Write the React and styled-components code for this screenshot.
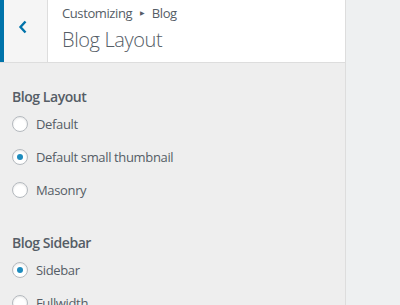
import React from "react";
import styled, { createGlobalStyle } from "styled-components";

const Global = createGlobalStyle`
  html, body { margin: 0; padding: 0; }
  body { background: #eef0f1; font-family: "Open Sans", "Noto Sans", sans-serif; }
`;

const Page = styled.div`
  display: flex;
  height: 305px;
  overflow: hidden;
`;

const Panel = styled.div`
  width: 345px;
  flex-shrink: 0;
  background: #eeeeee;
  border-right: 1px solid #dddddd;
  display: flex;
  flex-direction: column;
`;

const Header = styled.div`
  display: flex;
  flex-shrink: 0;
  height: 62px;
  background: #fff;
  border-bottom: 1px solid #dddddd;
`;

const BackButton = styled.button`
  width: 48px;
  height: 100%;
  flex-shrink: 0;
  padding: 20px 5px 0 0;
  border: none;
  border-left: 4px solid #0073aa;
  border-right: 1px solid #dddddd;
  background: #f5f5f5;
  display: flex;
  align-items: flex-start;
  justify-content: center;
  color: #0073aa;
  box-sizing: border-box;
`;

const TitleBox = styled.div`
  padding: 3px 0 0 14px;
  color: #555d66;
`;

const Crumb = styled.div`
  font-size: 13px;
  line-height: 20px;
  letter-spacing: -0.4px;
  color: #555d66;
  display: flex;
  align-items: center;
`;

const Arrow = styled.span`
  font-size: 6px;
  margin: 0 7px 0 8px;
`;

const Title = styled.div`
  font-size: 20px;
  font-weight: 300;
  line-height: 27px;
  letter-spacing: -0.4px;
  margin-top: 3px;
  color: #555d66;
`;

const Body = styled.div`
  padding: 24px 12px 0 12px;
  display: flex;
  flex-direction: column;
`;

const Group = styled.div`
  display: flex;
  flex-direction: column;
  margin-bottom: 18px;
`;

const GroupTitle = styled.div`
  font-size: 14px;
  font-weight: 600;
  line-height: 20px;
  letter-spacing: -0.45px;
  color: #555d66;
  margin-bottom: 9px;
`;

const Option = styled.label`
  display: flex;
  align-items: center;
  height: 16px;
  margin-bottom: 17px;
  font-size: 13px;
  letter-spacing: -0.35px;
  color: #555d66;
  white-space: nowrap;
`;

const Radio = styled.span`
  width: 16px;
  height: 16px;
  flex-shrink: 0;
  box-sizing: border-box;
  border-radius: 50%;
  border: 1px solid #b4b9be;
  background: #fff;
  box-shadow: inset 0 1px 2px rgba(0,0,0,0.1);
  margin-right: 8px;
  display: flex;
  align-items: center;
  justify-content: center;
  &::after {
    content: "";
    width: 6px;
    height: 6px;
    border-radius: 50%;
    background: ${(p) => (p.$checked ? "#1e8cbe" : "transparent")};
  }
`;

const Preview = styled.div`
  flex: 1;
  background: #eef0f1;
`;

const groups = [
  { title: "Blog Layout", options: ["Default", "Default small thumbnail", "Masonry"], checked: 1 },
  { title: "Blog Sidebar", options: ["Sidebar", "Fullwidth"], checked: 0 },
];

export default function App() {
  return (
    <Page>
      <Global />
      <Panel>
        <Header>
          <BackButton aria-label="Back">
            <svg width="10" height="14" viewBox="0 0 10 14">
              <path d="M7.5 1.5 L2.5 7 L7.5 12.5" fill="none" stroke="currentColor" strokeWidth="2.4" />
            </svg>
          </BackButton>
          <TitleBox>
            <Crumb>
              Customizing<Arrow>▶</Arrow>Blog
            </Crumb>
            <Title>Blog Layout</Title>
          </TitleBox>
        </Header>
        <Body>
          {groups.map((g) => (
            <Group key={g.title}>
              <GroupTitle>{g.title}</GroupTitle>
              {g.options.map((o, i) => (
                <Option key={o}>
                  <Radio $checked={i === g.checked} />
                  {o}
                </Option>
              ))}
            </Group>
          ))}
        </Body>
      </Panel>
      <Preview />
    </Page>
  );
}
